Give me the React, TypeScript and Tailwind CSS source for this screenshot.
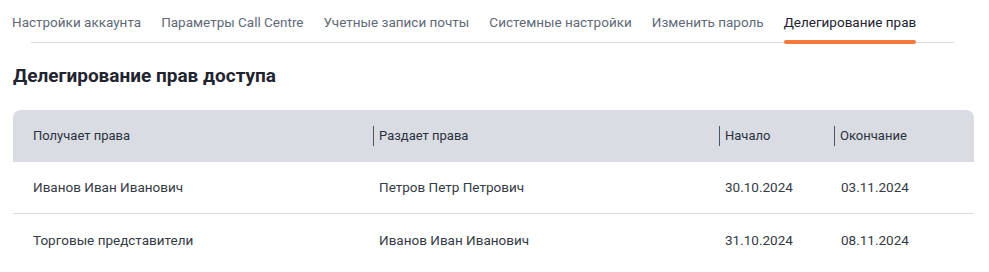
const TABS = [
  "Настройки аккаунта",
  "Параметры Call Centre",
  "Учетные записи почты",
  "Системные настройки",
  "Изменить пароль",
  "Делегирование прав",
];

const ROWS = [
  { to: "Иванов Иван Иванович", from: "Петров Петр Петрович", start: "30.10.2024", end: "03.11.2024" },
  { to: "Торговые представители", from: "Иванов Иван Иванович", start: "31.10.2024", end: "08.11.2024" },
];

const COLS = "grid grid-cols-[360px_346px_115px_140px]";

const HeadCell = ({ label, sep }: { label: string; sep?: boolean }) => (
  <div className={`flex items-center ${sep ? "" : "pl-5"}`}>
    {sep && <span className="w-px h-5 bg-[#4b5565] mr-[5px]" />}
    <span>{label}</span>
  </div>
);

export default function App() {
  return (
    <div
      className="w-[989px] h-[272px] bg-white overflow-hidden"
      style={{ fontFamily: "Roboto, 'Noto Sans', sans-serif" }}
    >
      {/* Tabs */}
      <div className="relative">
        <div className="absolute left-[31px] top-[42px] w-[923px] h-px bg-[#dcdde1]" />
        <nav className="relative flex gap-5 pl-3 h-[44px]">
          {TABS.map((t, i) => {
            const active = i === TABS.length - 1;
            return (
              <div
                key={t}
                className={`relative pt-3 text-[13.5px] ${
                  active ? "text-[#1e2330]" : "text-[#5f6977]"
                }`}
              >
                {t}
                {active && (
                  <span className="absolute left-0 right-0 bottom-0 h-1 rounded-full bg-[#f5793b]" />
                )}
              </div>
            );
          })}
        </nav>
      </div>

      {/* Heading */}
      <h1 className="mt-5 ml-[13px] text-[19px] leading-6 font-bold text-[#1f2430]">
        Делегирование прав доступа
      </h1>

      {/* Table */}
      <div className="mt-[22px] ml-[13px] w-[961px]">
        <div className={`${COLS} h-[52px] bg-[#d9dce3] rounded-t-lg text-[13px] text-[#2b313c]`}>
          <HeadCell label="Получает права" />
          <HeadCell label="Раздает права" sep />
          <HeadCell label="Начало" sep />
          <HeadCell label="Окончание" sep />
        </div>
        {ROWS.map((r, i) => (
          <div
            key={i}
            className={`${COLS} h-[52px] items-center text-[13.5px] text-[#343a44] ${
              i === 0 ? "border-b border-[#dcdde1]" : ""
            }`}
          >
            <div className="pl-5">{r.to}</div>
            <div className="pl-1.5">{r.from}</div>
            <div className="pl-1.5">{r.start}</div>
            <div className="pl-[7px]">{r.end}</div>
          </div>
        ))}
      </div>
    </div>
  );
}
